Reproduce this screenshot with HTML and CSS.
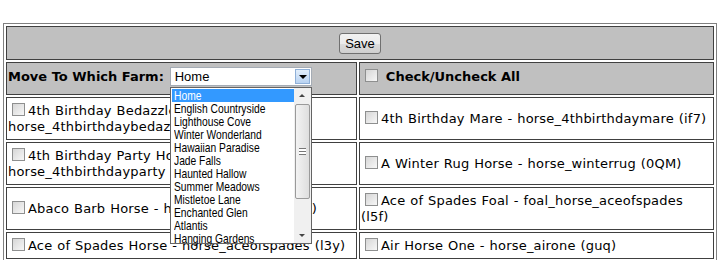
FILE: index.html
```html
<!DOCTYPE html>
<html lang="en">
<head>
    <meta charset="UTF-8">
    <title>Move Horses</title>
    <link rel="stylesheet" href="styles.css">
</head>
<body>
    <div class="page">
        <table class="farm-table">
            <colgroup>
                <col class="left-col">
                <col class="right-col">
            </colgroup>
            <tr>
                <td colspan="2" class="bar save-cell"><button class="save-btn">Save</button></td>
            </tr>
            <tr>
                <td class="bar head-cell">
                    <span class="label">Move To Which Farm:</span>
                    <div class="farm-select">
                        <span class="farm-value">Home</span>
                        <span class="farm-arrow"></span>
                        <!-- open list -->
                        <div class="farm-list">
                            <div class="farm-items">
                                <div class="farm-item selected"><span>Home</span></div>
                                <div class="farm-item"><span>English Countryside</span></div>
                                <div class="farm-item"><span>Lighthouse Cove</span></div>
                                <div class="farm-item"><span>Winter Wonderland</span></div>
                                <div class="farm-item"><span>Hawaiian Paradise</span></div>
                                <div class="farm-item"><span>Jade Falls</span></div>
                                <div class="farm-item"><span>Haunted Hallow</span></div>
                                <div class="farm-item"><span>Summer Meadows</span></div>
                                <div class="farm-item"><span>Mistletoe Lane</span></div>
                                <div class="farm-item"><span>Enchanted Glen</span></div>
                                <div class="farm-item"><span>Atlantis</span></div>
                                <div class="farm-item"><span>Hanging Gardens</span></div>
                            </div>
                            <div class="scroll">
                                <div class="scroll-btn up"></div>
                                <div class="scroll-thumb"><span class="grip"></span></div>
                                <div class="scroll-track"></div>
                                <div class="scroll-btn down"></div>
                            </div>
                        </div>
                    </div>
                </td>
                <td class="bar head-cell"><span class="box"></span> <span class="label">Check/Uncheck All</span></td>
            </tr>
            <tr>
                <td><span class="box"></span>4th Birthday Bedazzled Horse - horse_4thbirthdaybedazzled (8Kp)</td>
                <td><span class="box"></span>4th Birthday Mare - horse_4thbirthdaymare (if7)</td>
            </tr>
            <tr>
                <td><span class="box"></span>4th Birthday Party Horse - horse_4thbirthdayparty (r2D)</td>
                <td><span class="box"></span>A Winter Rug Horse - horse_winterrug (0QM)</td>
            </tr>
            <tr>
                <td><span class="box"></span>Abaco Barb Horse - horse_abacobarb (k4s)</td>
                <td><span class="box"></span>Ace of Spades Foal - foal_horse_aceofspades (l5f)</td>
            </tr>
            <tr>
                <td><span class="box"></span>Ace of Spades Horse - horse_aceofspades (l3y)</td>
                <td><span class="box"></span>Air Horse One - horse_airone (guq)</td>
            </tr>
        </table>
    </div>
</body>
</html>
```

FILE: styles.css
```css
body {
    margin: 0;
    background: #fff;
    font-family: 'DejaVu Sans', Verdana, sans-serif;
    font-size: 13px;
    color: #000;
}

.page {
    padding: 23px 0 0 3px;
}

.farm-table {
    width: 714px;
    table-layout: fixed;
    border: 1px solid #808080;
    border-spacing: 2px;
}

.left-col {
    width: 351px;
}

.right-col {
    width: 355px;
}

.farm-table td {
    box-sizing: border-box;
    border: 1px solid #404040;
    padding: 5px 1px 4px;
    line-height: 16px;
    letter-spacing: 0.2px;
    word-spacing: 0.5px;
    vertical-align: middle;
}

.bar {
    background: #c0c0c0;
}

.save-cell {
    text-align: center;
    height: 34px;
}

.farm-table .head-cell {
    height: 33px;
    padding: 4px 1px 0;
    line-height: 19px;
    vertical-align: top;
}

.save-btn {
    font-family: 'Liberation Sans', Arial, sans-serif;
    font-size: 13px;
    width: 42px;
    height: 21px;
    padding: 0;
    border: 1px solid #707070;
    border-radius: 3px;
    background: linear-gradient(#f2f2f2 0%, #ebebeb 50%, #dddddd 51%, #cfcfcf 100%);
    color: #000;
    letter-spacing: 0;
}

.label {
    font-weight: bold;
    letter-spacing: 0;
    word-spacing: 0;
}

.box {
    display: inline-block;
    width: 11px;
    height: 11px;
    margin: 0 3px 0 4px;
    border: 1px solid #8e8f8f;
    background: linear-gradient(135deg, #d6d6d6, #f7f7f7);
    vertical-align: -1px;
}

.farm-select {
    position: relative;
    display: inline-block;
    width: 140px;
    height: 17px;
    margin-left: 1px;
    border: 1px solid #a5acb5;
    background: #fff;
    vertical-align: top;
    font-family: 'Liberation Sans', Arial, sans-serif;
    font-size: 13px;
    letter-spacing: 0;
    word-spacing: 0;
}

.farm-value {
    display: block;
    padding-left: 4px;
    line-height: 17px;
}

.farm-arrow {
    position: absolute;
    top: 1px;
    right: 1px;
    width: 15px;
    height: 15px;
    box-sizing: border-box;
    border: 1px solid #8fb0d8;
    background: linear-gradient(#e2eefb, #b9d3f2);
}

.farm-arrow::after {
    content: "";
    position: absolute;
    left: 3px;
    top: 5px;
    border-left: 4px solid transparent;
    border-right: 4px solid transparent;
    border-top: 4px solid #000;
}

.farm-list {
    position: absolute;
    z-index: 5;
    left: -1px;
    top: 19px;
    width: 142px;
    height: 157px;
    box-sizing: border-box;
    border: 1px solid #646464;
    background: #fff;
    display: flex;
    font-size: 13px;
    line-height: 13px;
}

.farm-items {
    flex: 1;
    padding-top: 1px;
}

.farm-item {
    padding-left: 2px;
    margin-left: 1px;
    white-space: nowrap;
}

/* the list font is a narrow one */
.farm-item span {
    display: inline-block;
    transform: scaleX(0.79);
    transform-origin: left center;
}

.farm-item.selected {
    background: #3399ff;
    color: #fff;
}

.scroll {
    width: 17px;
    display: flex;
    flex-direction: column;
    background: #f0f0f0;
}

.scroll-btn {
    position: relative;
    height: 16px;
}

.scroll-btn::after {
    content: "";
    position: absolute;
    left: 5px;
    border-left: 3px solid transparent;
    border-right: 3px solid transparent;
}

.scroll-btn.up::after {
    top: 6px;
    border-bottom: 3px solid #444;
}

.scroll-btn.down::after {
    top: 7px;
    border-top: 3px solid #444;
}

.scroll-thumb {
    height: 95px;
    margin: 0 1px;
    box-sizing: border-box;
    border: 1px solid #9a9a9a;
    border-radius: 2px;
    background: linear-gradient(90deg, #f3f3f3, #dedede);
    display: flex;
    align-items: center;
    justify-content: center;
}

.grip {
    width: 7px;
    height: 5px;
    border-top: 1px solid #777;
    border-bottom: 1px solid #777;
    background: linear-gradient(#fff 0, #fff 2px, #777 2px, #777 3px, #fff 3px);
}

.scroll-track {
    flex: 1;
}
```
